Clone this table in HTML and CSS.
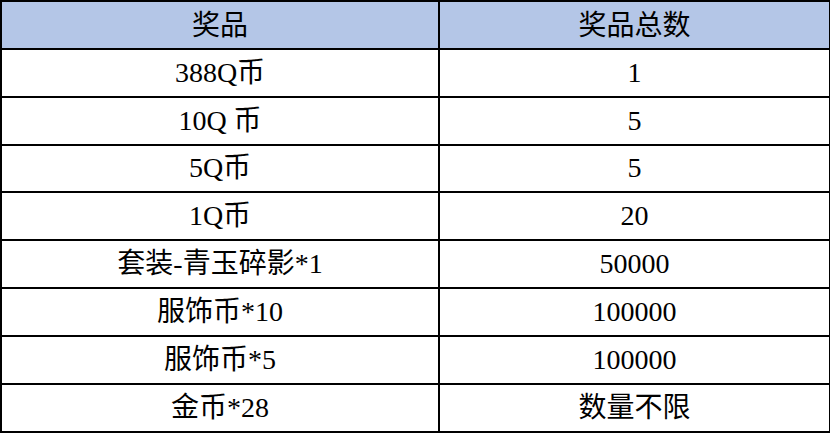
FILE: index.html
```html
<!DOCTYPE html>
<html lang="zh-CN">
<head>
<meta charset="utf-8">
<title>奖品</title>
<link rel="stylesheet" href="styles.css">
</head>
<body>
<table class="prize-table">
  <colgroup>
    <col class="col-name">
    <col class="col-count">
  </colgroup>
  <thead>
    <tr class="head-row"><th>奖品</th><th>奖品总数</th></tr>
  </thead>
  <tbody>
    <tr><td>388Q币</td><td>1</td></tr>
    <tr><td>10Q 币</td><td>5</td></tr>
    <tr><td>5Q币</td><td>5</td></tr>
    <tr><td>1Q币</td><td>20</td></tr>
    <tr><td>套装-青玉碎影*1</td><td>50000</td></tr>
    <tr><td>服饰币*10</td><td>100000</td></tr>
    <tr><td>服饰币*5</td><td>100000</td></tr>
    <tr><td>金币*28</td><td>数量不限</td></tr>
  </tbody>
</table>
</body>
</html>
```

FILE: styles.css
```css
html, body {
  margin: 0;
  padding: 0;
  background: #ffffff;
}

.prize-table {
  border-collapse: collapse;
  width: 829px;
  table-layout: fixed;
  font-family: "Liberation Serif", "Noto Sans CJK SC", serif;
  font-size: 28px;
  color: #000;
}

.col-name { width: 438px; }
.col-count { width: 391px; }

.prize-table th,
.prize-table td {
  border: 2px solid #000;
  height: 47.85px;
  padding: 0;
  text-align: center;
  vertical-align: middle;
  font-weight: normal;
  line-height: 1;
  box-sizing: border-box;
}

.head-row th {
  background: #b4c6e7;
  padding-top: 3px;
}
```
